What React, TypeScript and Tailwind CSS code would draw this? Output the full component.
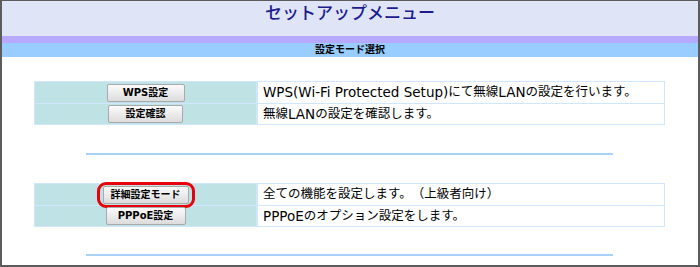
const jp = { fontFamily: '"DejaVu Sans", "Noto Sans CJK JP", sans-serif' };

type Row = { label: string; width: string; text: string; marked?: boolean };

const first: Row[] = [
  { label: "WPS設定", width: "w-[78px]", text: "WPS(Wi-Fi Protected Setup)にて無線LANの設定を行います。" },
  { label: "設定確認", width: "w-[75px]", text: "無線LANの設定を確認します。" },
];

const second: Row[] = [
  { label: "詳細設定モード", width: "w-[86px]", text: "全ての機能を設定します。（上級者向け）", marked: true },
  { label: "PPPoE設定", width: "w-[80px]", text: "PPPoEのオプション設定をします。" },
];

// latin runs are drawn a bit larger, like Meiryo does
const Mixed = ({ text }: { text: string }) => (
  <>
    {text.split(/([\x20-\x7e]+)/).map((part, i) =>
      /^[\x20-\x7e]+$/.test(part) ? (
        <span key={i} className="text-[13.5px]">
          {part}
        </span>
      ) : (
        <span key={i}>{part}</span>
      )
    )}
  </>
);

const MenuButton = ({ row }: { row: Row }) => (
  <div className="relative">
    <button
      className={`${row.width} h-[18px] flex items-center justify-center rounded-[2px] border border-[#a9a9a9] bg-gradient-to-b from-[#fbfbfb] to-[#dcdcdc] text-[10px] font-bold leading-none text-black`}
      style={jp}
    >
      {row.label}
    </button>
    {row.marked && (
      <span className="pointer-events-none absolute -left-[6px] -right-[6px] -top-[4px] -bottom-[4px] rounded-[9px] border-[3px] border-[#e8000b]" />
    )}
  </div>
);

const MenuTable = ({ rows }: { rows: Row[] }) => (
  <div className="ml-[32px] w-[631px] border border-[#cfe6fd]">
    {rows.map((row, i) => (
      <div key={row.label} className={`flex h-[21px] ${i > 0 ? "border-t border-[#cfe6fd]" : ""}`}>
        <div className="w-[221px] flex items-center justify-center bg-[#bfe3e5]">
          <MenuButton row={row} />
        </div>
        <div
          className="flex-1 flex items-center border-l-2 border-[#cfe6fd] bg-white pl-[5px] text-[12.5px] text-black whitespace-nowrap [text-spacing-trim:space-all]"
          style={jp}
        >
          <Mixed text={row.text} />
        </div>
      </div>
    ))}
  </div>
);

export default function App() {
  return (
    <div className="w-[700px] h-[267px] box-border flex flex-col bg-white border-t border-x-2 border-b-2 border-[#5c5c5c]">
      <div className="h-[35px] bg-[#e0e4f7] flex justify-center">
        <h1
          className="pt-[1px] text-[17px] font-medium leading-[20px] text-[#1c1c8e]"
          style={{ fontFamily: '"Noto Sans CJK JP", sans-serif' }}
        >
          セットアップメニュー
        </h1>
      </div>
      <div className="h-[7px] bg-[#b7a9ff]" />
      <div
        className="h-[14px] bg-[#99ccff] flex items-center justify-center text-[10px] font-bold text-black leading-none"
        style={jp}
      >
        設定モード選択
      </div>
      <div className="pt-[24px] flex flex-col">
        <MenuTable rows={first} />
        <div className="mt-[28px] ml-[84px] w-[527px] h-[2px] bg-[#a8d2f8]" />
        <div className="mt-[28px]">
          <MenuTable rows={second} />
        </div>
        <div className="mt-[27px] ml-[84px] w-[527px] h-[2px] bg-[#a8d2f8]" />
      </div>
    </div>
  );
}
